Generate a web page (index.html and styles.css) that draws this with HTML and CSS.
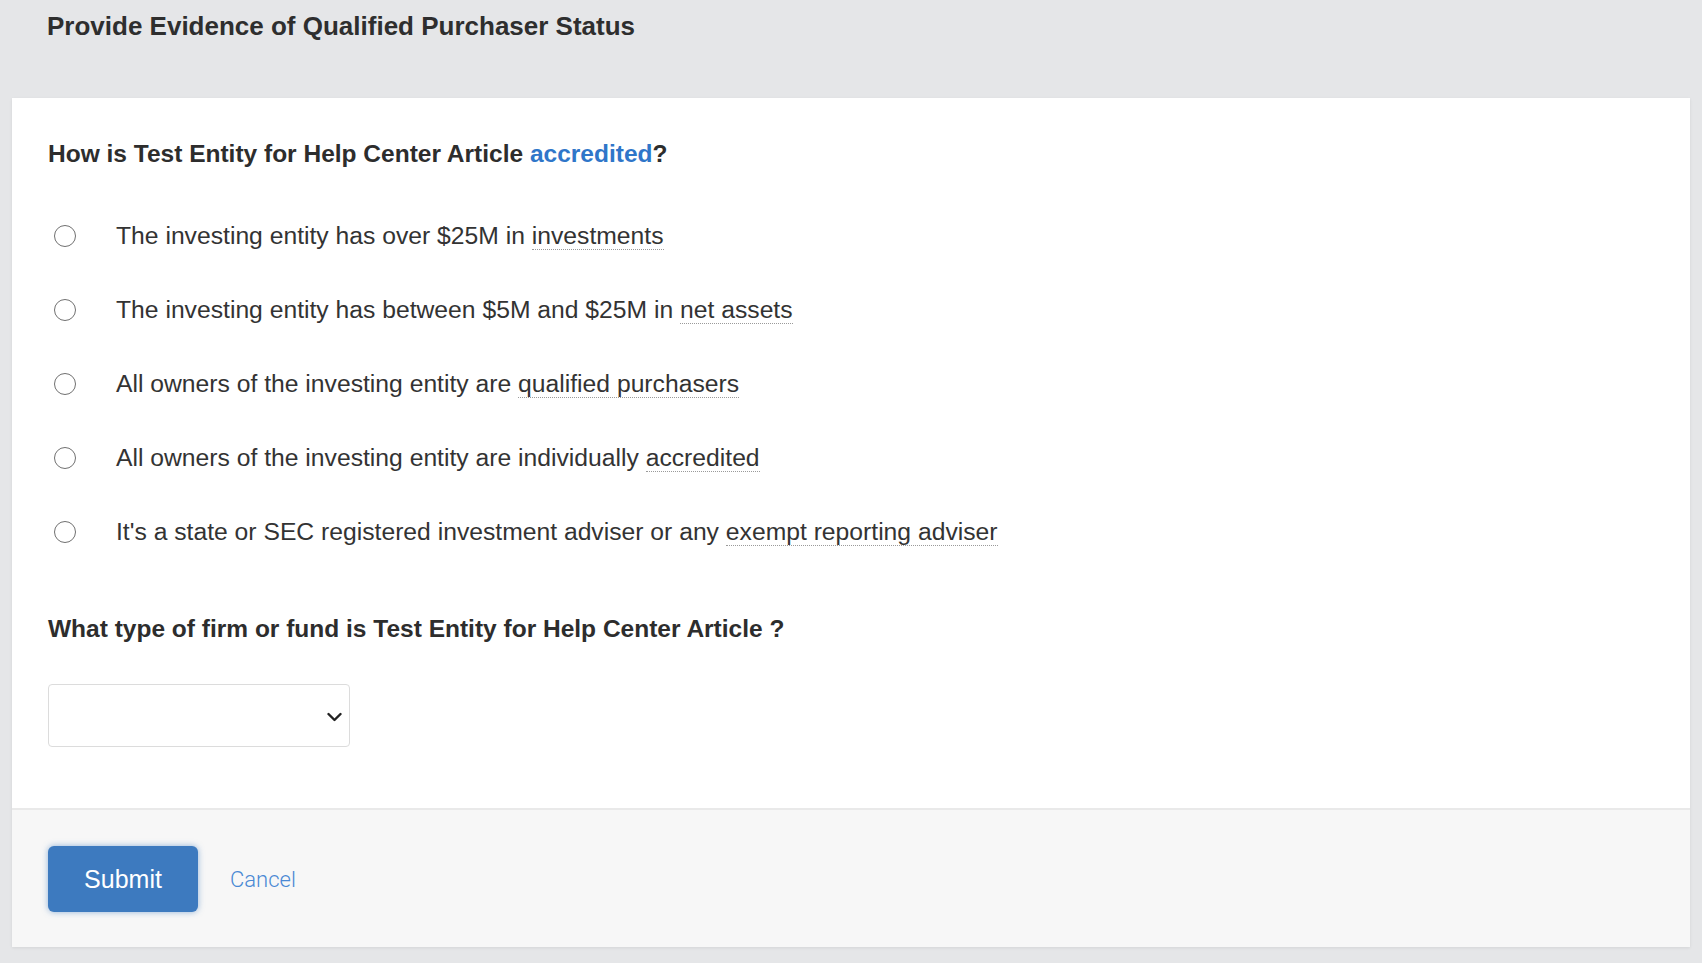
FILE: index.html
```html
<!DOCTYPE html>
<html lang="en">

<head>
  <meta charset="UTF-8">
  <title>Provide Evidence of Qualified Purchaser Status</title>
  <link rel="stylesheet" href="styles.css">
</head>

<body>
  <header class="page-header">
    <h1 class="page-title">Provide Evidence of Qualified Purchaser Status</h1>
  </header>

  <main class="card">
    <section class="card-body">
      <h2 class="question">How is Test Entity for Help Center Article <a class="term-link" href="#">accredited</a>?</h2>

      <ul class="options">
        <li class="option">
          <span class="radio"></span>
          <span class="option-label">The investing entity has over $25M in <span class="term">investments</span></span>
        </li>
        <li class="option">
          <span class="radio"></span>
          <span class="option-label">The investing entity has between $5M and $25M in <span class="term">net assets</span></span>
        </li>
        <li class="option">
          <span class="radio"></span>
          <span class="option-label">All owners of the investing entity are <span class="term">qualified purchasers</span></span>
        </li>
        <li class="option">
          <span class="radio"></span>
          <span class="option-label">All owners of the investing entity are individually <span class="term">accredited</span></span>
        </li>
        <li class="option">
          <span class="radio"></span>
          <span class="option-label">It's a state or SEC registered investment adviser or any <span class="term">exempt reporting adviser</span></span>
        </li>
      </ul>

      <h2 class="question question-firm">What type of firm or fund is Test Entity for Help Center Article ?</h2>

      <div class="select-box">
        <svg class="chevron" width="15" height="10" viewBox="0 0 15 10">
          <path d="M1.5 2 L7.5 8 L13.5 2" fill="none" stroke="#222" stroke-width="2.4" stroke-linecap="round" stroke-linejoin="round"/>
        </svg>
      </div>
    </section>

    <footer class="card-footer">
      <button class="btn-submit">Submit</button>
      <a class="cancel-link" href="#">Cancel</a>
    </footer>
  </main>
</body>

</html>
```

FILE: styles.css
```css
body {
  margin: 0;
  background-color: #e5e6e8;
  font-family: "Liberation Sans", Arial, sans-serif;
  color: #333;
  min-height: 963px;
}

.page-header {
  height: 98px;
  box-sizing: border-box;
  padding: 11px 47px 0;
}

.page-title {
  margin: 0;
  font-size: 26px;
  line-height: 30px;
  font-weight: bold;
  color: #2e2e2e;
}

.card {
  margin: 0 12px;
  background-color: #fff;
  box-shadow: 0 1px 3px rgba(0, 0, 0, 0.08);
}

.card-body {
  padding: 42px 36px 61px;
}

.question {
  margin: 0;
  font-size: 24.5px;
  line-height: 28px;
  font-weight: bold;
  color: #2d2d2d;
}

.term-link {
  color: #2f76c9;
  text-decoration: none;
}

.options {
  list-style: none;
  margin: 53px 0 0;
  padding: 0;
  display: flex;
  flex-direction: column;
  gap: 44px;
}

.option {
  display: flex;
  align-items: center;
  height: 30px;
}

.radio {
  width: 22px;
  height: 22px;
  box-sizing: border-box;
  border: 1.5px solid #707070;
  border-radius: 50%;
  background-color: #fff;
  margin-left: 6px;
  margin-right: 40px;
  flex-shrink: 0;
}

.option-label {
  font-size: 24.7px;
  line-height: 30px;
  color: #333;
}

.term {
  border-bottom: 1px dotted #9a9a9a;
}

.question-firm {
  margin-top: 68px;
}

.select-box {
  margin-top: 41px;
  width: 302px;
  height: 63px;
  box-sizing: border-box;
  border: 1px solid #dcdcdc;
  border-radius: 4px;
  display: flex;
  align-items: center;
  justify-content: flex-end;
  padding-right: 7px;
  padding-top: 2px;
}

.card-footer {
  border-top: 2px solid #e9e9e9;
  background-color: #f7f7f7;
  padding: 36px 36px 35px;
  display: flex;
  align-items: center;
}

.btn-submit {
  width: 150px;
  height: 66px;
  border: none;
  border-radius: 6px;
  background-color: #3d7abf;
  color: #fff;
  font-family: "Liberation Sans", Arial, sans-serif;
  font-size: 25px;
  box-shadow: 0 0 6px rgba(61, 122, 191, 0.55);
  cursor: pointer;
}

.cancel-link {
  margin-left: 32px;
  font-family: Roboto, "Liberation Sans", sans-serif;
  font-weight: 300;
  font-size: 22px;
  color: #4a89d4;
  text-decoration: none;
}
```
